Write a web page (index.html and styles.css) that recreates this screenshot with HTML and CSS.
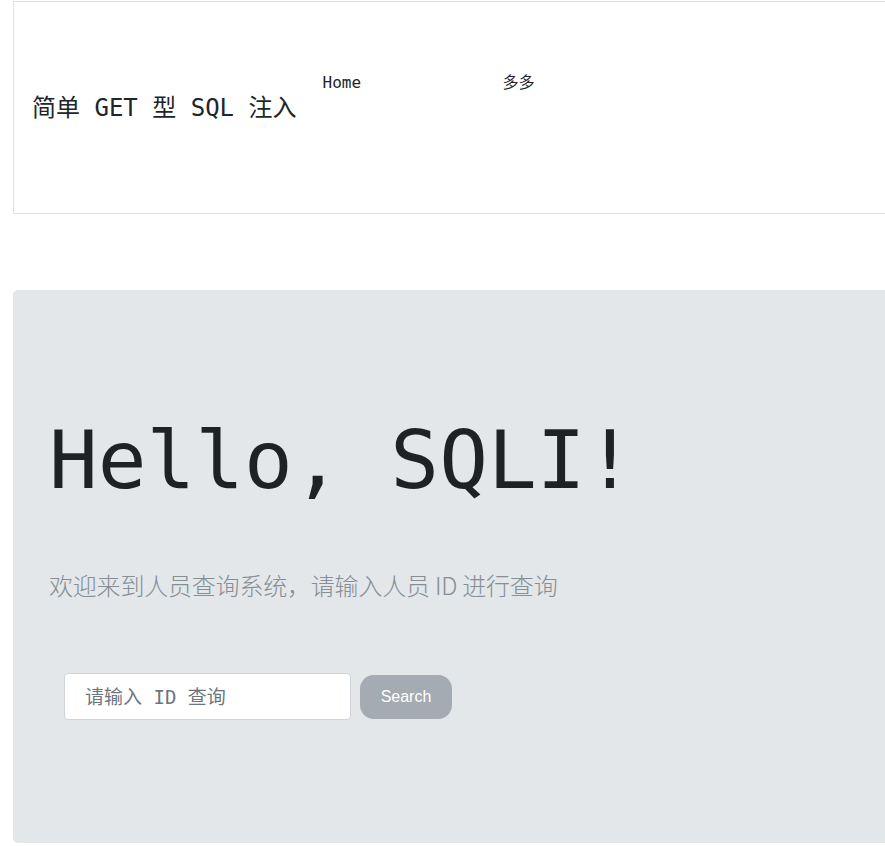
FILE: index.html
```html
<!DOCTYPE html>
<html lang="zh">
<head>
<meta charset="utf-8">
<title>简单 GET 型 SQL 注入</title>
<link rel="stylesheet" href="styles.css">
</head>
<body>
<header class="topbar">
  <div class="brand">简单 GET 型 SQL 注入</div>
  <nav class="nav">
    <a class="nav-link" href="#">Home</a>
    <a class="nav-link" href="#">多多</a>
  </nav>
</header>
<main class="jumbotron">
  <h1 class="display">Hello, SQLI!</h1>
  <p class="lead">欢迎来到人员查询系统，请输入人员 ID 进行查询</p>
  <form class="search-form">
    <input class="search-input" type="text" name="id" placeholder="请输入 ID 查询">
    <button class="search-btn" type="button">Search</button>
  </form>
</main>
</body>
</html>
```

FILE: styles.css
```css
html {
  overflow-x: hidden;
}
body {
  margin: 0;
  padding: 1px 0 0 13px;
  font-family: "DejaVu Sans Mono", "Noto Sans CJK SC", monospace;
  color: #212529;
  background: #fff;
  width: 950px;
}
.topbar {
  display: flex;
  align-items: center;
  height: 211px;
  border: 1px solid #dee2e6;
  box-sizing: content-box;
}
.brand {
  font-size: 24px;
  line-height: 28px;
  padding-left: 18px;
  color: #212529;
}
.nav {
  display: flex;
  align-self: flex-start;
  padding-top: 69px;
  margin-left: 26px;
}
.nav-link {
  font-size: 16px;
  line-height: 24px;
  color: #212529;
  text-decoration: none;
  width: 180px;
}
.jumbotron {
  margin-top: 76px;
  background: #e3e7ea;
  border-radius: 5px;
  height: 553px;
  padding: 121px 32px 0 36px;
  box-sizing: border-box;
}
.display {
  margin: 0;
  font-family: "DejaVu Sans Mono", monospace;
  font-weight: normal;
  font-size: 81px;
  line-height: 98px;
  color: #1e2225;
}
.lead {
  margin: 58px 0 0;
  font-family: "Noto Sans CJK SC", "Noto Sans", sans-serif;
  font-size: 24px;
  line-height: 36px;
  font-weight: 300;
  letter-spacing: -0.2px;
  color: #868e96;
}
.search-form {
  display: flex;
  align-items: center;
  margin: 70px 0 0 15px;
}
.search-input {
  width: 287px;
  height: 47px;
  box-sizing: border-box;
  border: 1px solid #ced4da;
  border-radius: 4px;
  padding: 0 0 0 20px;
  font-family: "DejaVu Sans Mono", "Noto Sans CJK SC", monospace;
  font-size: 19px;
  color: #495057;
  background: #fff;
}
.search-input::placeholder {
  color: #6c757d;
}
.search-btn {
  margin-left: 9px;
  width: 92px;
  height: 44px;
  border: none;
  border-radius: 14px;
  background: #a4abb3;
  color: #fff;
  font-family: "Liberation Sans", Arial, sans-serif;
  font-size: 16px;
  padding: 0;
}
```
